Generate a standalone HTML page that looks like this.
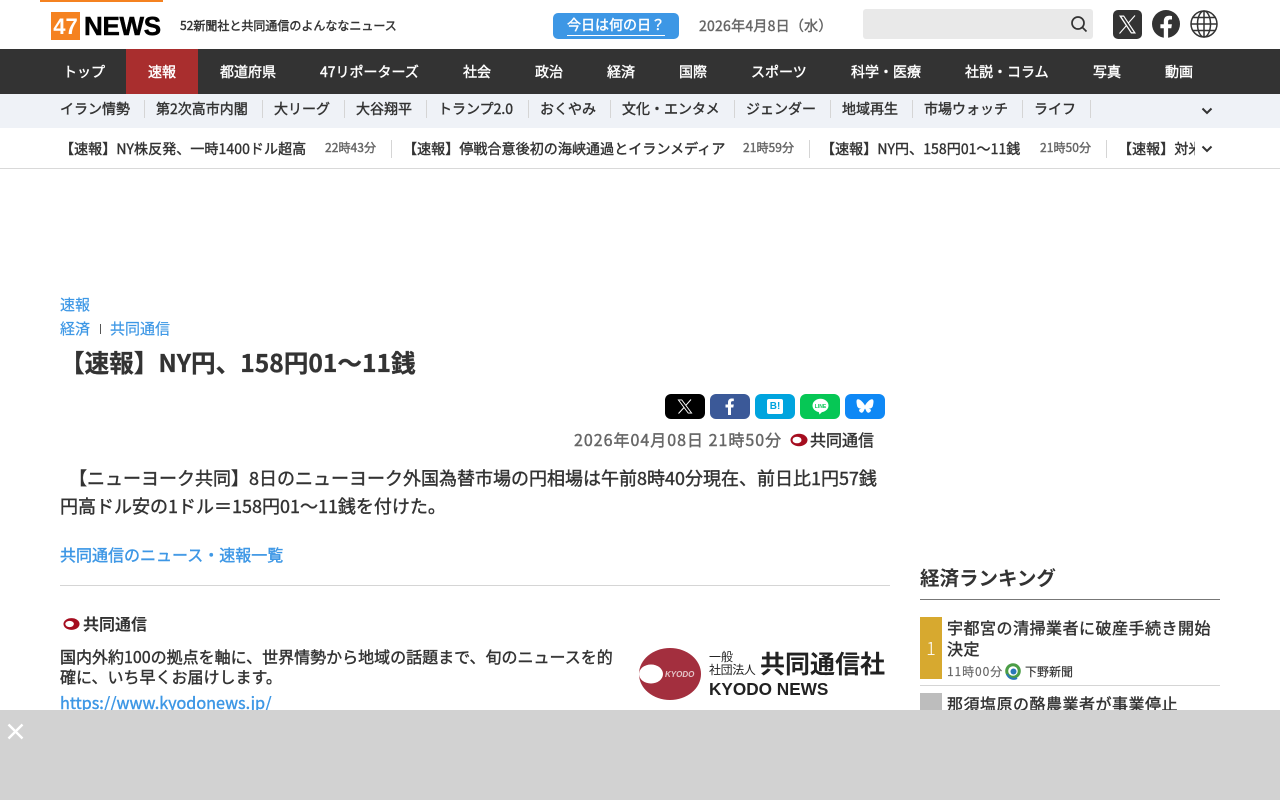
<!DOCTYPE html>
<html lang="ja"><head><meta charset="utf-8"><title>47NEWS</title>
<style>
*{box-sizing:border-box}
html,body{margin:0;padding:0;width:1280px;height:800px;overflow:hidden;background:#fff}
body{position:relative;font-family:"Noto Sans CJK JP","Liberation Sans",sans-serif;color:#333;font-weight:400;-webkit-text-stroke-width:.4px}
.a{position:absolute;white-space:nowrap;line-height:1.2}
.l{color:#3d97e5}
.n{-webkit-text-stroke-width:0}
.v{position:absolute;width:1px;background:#d5d5d5}
svg{position:absolute;display:block}
</style></head><body>
<div class="a" style="left:40px;top:0;width:123px;height:2px;background:#f58220"></div>
<div class="a n" style="left:51px;top:12px;width:29px;height:28px;background:#f58220;color:#fff;font:700 22px/29px 'Liberation Sans',sans-serif;text-align:center">47</div>
<div class="a" style="left:84px;top:11px;color:#000;font:700 26px/30px 'Liberation Sans',sans-serif;-webkit-text-stroke:.5px #000;letter-spacing:-.3px">NEWS</div>
<div class="a" style="left:180px;top:18px;font-size:12px;line-height:16px">52新聞社と共同通信のよんななニュース</div>
<div class="a" style="left:553px;top:13px;width:126px;height:26px;background:#3d97e5;border-radius:5px"></div>
<div class="a" style="left:567px;top:16px;color:#fff;font-size:14px;line-height:19px;border-bottom:1px solid #fff">今日は何の日？</div>
<div class="a" style="left:699px;top:16px;font-size:14px;line-height:20px;color:#666;letter-spacing:.25px">2026年4月8日（水）</div>
<div class="a" style="left:863px;top:9px;width:230px;height:30px;background:#e9e9e9;border-radius:3px"></div>
<svg style="left:1070px;top:15px" width="18" height="18" viewBox="0 0 18 18" fill="none" stroke="#333" stroke-width="1.7"><circle cx="8" cy="8" r="6"/><path d="M12.5 12.5L16.5 16.5"/></svg>
<svg style="left:1113px;top:10px" width="29" height="29" viewBox="0 0 29 29"><rect width="29" height="29" rx="5" fill="#333"/><path d="M6 5.5h5l12 18h-5zM8.5 6.800l10.200 15.400h2L10.500 6.800z" fill="#fff" fill-rule="evenodd"/><path d="M22 5.500L15.400 13M13.400 15.600L6.500 23.500" stroke="#fff" stroke-width="1.100"/></svg>
<svg style="left:1152px;top:10px" width="28" height="28" viewBox="0 0 28 28"><circle cx="14" cy="14" r="14" fill="#333"/><path d="M11.800 28V18.200H8.400v-4h3.400v-3c0-3.500 2-5.400 5.200-5.400 1.500 0 3 .3 3 .3v3.400h-1.700c-1.700 0-2.200 1-2.200 2.100v2.600h3.800l-.6 4h-3.200V28z" fill="#fff"/></svg>
<svg style="left:1190px;top:10px" width="28" height="28" viewBox="0 0 28 28" fill="none" stroke="#333" stroke-width="1.500"><circle cx="14" cy="14" r="13"/><ellipse cx="14" cy="14" rx="6.500" ry="13"/><path d="M14 1v26M1 14h26M3 7.500h22M3 20.500h22"/></svg>

<div class="a" style="left:0;top:49px;width:1280px;height:45px;background:#333"></div>
<div class="a" style="left:126px;top:49px;width:72px;height:45px;background:#a92e2e"></div>
<div class="a" style="left:0;top:64px;width:1280px;height:18px;color:#fff;font-size:14px;line-height:18px">
<span class="a" style="left:63px">トップ</span><span class="a" style="left:148px">速報</span><span class="a" style="left:220px">都道府県</span><span class="a" style="left:320px">47リポーターズ</span><span class="a" style="left:463px">社会</span><span class="a" style="left:535px">政治</span><span class="a" style="left:607px">経済</span><span class="a" style="left:679px">国際</span><span class="a" style="left:751px">スポーツ</span><span class="a" style="left:851px">科学・医療</span><span class="a" style="left:965px">社説・コラム</span><span class="a" style="left:1093px">写真</span><span class="a" style="left:1165px">動画</span></div>

<div class="a" style="left:0;top:94px;width:1280px;height:34px;background:#eff2f7"></div>
<div class="a" style="left:0;top:101px;width:1280px;height:18px;font-size:14px;line-height:18px">
<span class="a" style="left:60px">イラン情勢</span><span class="a" style="left:156px">第2次高市内閣</span><span class="a" style="left:274px">大リーグ</span><span class="a" style="left:356px">大谷翔平</span><span class="a" style="left:438px">トランプ2.0</span><span class="a" style="left:540px">おくやみ</span><span class="a" style="left:622px">文化・エンタメ</span><span class="a" style="left:746px">ジェンダー</span><span class="a" style="left:842px">地域再生</span><span class="a" style="left:924px">市場ウォッチ</span><span class="a" style="left:1034px">ライフ</span></div>
<div class="v" style="left:144px;top:100px;height:18px"></div><div class="v" style="left:262px;top:100px;height:18px"></div><div class="v" style="left:344px;top:100px;height:18px"></div><div class="v" style="left:426px;top:100px;height:18px"></div><div class="v" style="left:528px;top:100px;height:18px"></div><div class="v" style="left:610px;top:100px;height:18px"></div><div class="v" style="left:734px;top:100px;height:18px"></div><div class="v" style="left:830px;top:100px;height:18px"></div><div class="v" style="left:912px;top:100px;height:18px"></div><div class="v" style="left:1022px;top:100px;height:18px"></div><div class="v" style="left:1090px;top:100px;height:18px"></div>
<svg style="left:1201px;top:107px" width="12" height="8" viewBox="0 0 12 8" fill="none" stroke="#333" stroke-width="2"><path d="M1.500 1.500L6 6l4.500-4.500"/></svg>

<div class="a" style="left:0;top:168px;width:1280px;height:1px;background:#d9d9d9"></div>
<div class="a" style="left:0;top:141px;width:1195px;height:20px;overflow:hidden;font-size:14px;line-height:18px;letter-spacing:.08px">
<span class="a" style="left:60px;top:0">【速報】NY株反発、一時1400ドル超高</span><span class="a" style="left:325px;top:0;font-size:12px;color:#666">22時43分</span>
<span class="a" style="left:403px;top:0">【速報】停戦合意後初の海峡通過とイランメディア</span><span class="a" style="left:743px;top:0;font-size:12px;color:#666">21時59分</span>
<span class="a" style="left:821px;top:0">【速報】NY円、158円01～11銭</span><span class="a" style="left:1040px;top:0;font-size:12px;color:#666">21時50分</span>
<span class="a" style="left:1118px;top:0">【速報】対米関税交渉</span></div>
<div class="v" style="left:391px;top:140px;height:18px"></div><div class="v" style="left:809px;top:140px;height:18px"></div><div class="v" style="left:1106px;top:140px;height:18px"></div>
<svg style="left:1201px;top:145px" width="12" height="8" viewBox="0 0 12 8" fill="none" stroke="#333" stroke-width="2"><path d="M1.500 1.500L6 6l4.500-4.500"/></svg>

<div class="a l" style="left:60px;top:295px;font-size:15px;line-height:20px;-webkit-text-stroke-width:.2px">速報</div>
<div class="a l" style="left:60px;top:319px;font-size:15px;line-height:20px;-webkit-text-stroke-width:.2px">経済</div>
<div class="a" style="left:100px;top:324px;width:1px;height:10px;background:#555"></div>
<div class="a l" style="left:110px;top:319px;font-size:15px;line-height:20px;-webkit-text-stroke-width:.2px">共同通信</div>
<div class="a" style="left:60px;top:345px;font-size:24.600px;line-height:35px;font-weight:700;-webkit-text-stroke:.3px #333">【速報】NY円、158円01～11銭</div>

<div class="a" style="left:665px;top:394px;width:40px;height:25px;background:#000;border-radius:6px"></div>
<svg style="left:677px;top:399px" width="16" height="15" viewBox="0 0 16 15"><path d="M.5.500h4.500l10.500 14H11zM2.300 1.400l9.200 12.200h2.200L4.500 1.400z" fill="#fff" fill-rule="evenodd"/><path d="M14 .5L9 6.200M7 8.500L1.500 14.500" stroke="#fff"/></svg>
<div class="a" style="left:710px;top:394px;width:40px;height:25px;background:#3b5998;border-radius:6px"></div>
<svg style="left:725px;top:398px" width="10" height="17" viewBox="0 0 10 17"><path d="M3 17V9.500H.5V6.500H3V4.500C3 1.800 4.500.5 6.800.5c1 0 2 .1 2 .1v2.500H7.600C6.400 3.100 6 3.800 6 4.600v1.900h2.800l-.5 3H6V17z" fill="#fff"/></svg>
<div class="a" style="left:755px;top:394px;width:40px;height:25px;background:#00a4de;border-radius:6px"></div>
<div class="a n" style="left:767px;top:399px;width:16px;height:15px;background:#fff;border-radius:2px;color:#00a4de;font:700 10px/15px 'Liberation Sans',sans-serif;text-align:center">B!</div>
<div class="a" style="left:800px;top:394px;width:40px;height:25px;background:#06c755;border-radius:6px"></div>
<svg style="left:812px;top:398px" width="17" height="17" viewBox="0 0 17 17"><ellipse cx="8.500" cy="7.500" rx="8" ry="6.800" fill="#fff"/><path d="M6.500 13l1 3.500 3.500-3.500z" fill="#fff"/></svg>
<div class="a n" style="left:814px;top:404px;width:13px;text-align:center;color:#06c755;font:700 5px/7px 'Liberation Sans',sans-serif">LINE</div>
<div class="a" style="left:845px;top:394px;width:40px;height:25px;background:#0f88f5;border-radius:6px"></div>
<svg style="left:856px;top:399px" width="18" height="15" viewBox="0 0 18 15"><path d="M9 6.500C8.200 5 5.800 1.700 3.500.6 1.800-.2.500.2.500 2.600c0 1 .5 4.500 1 5.300.9 1.600 2.800 1.900 4.400 1.500-2.900.5-3.600 2-2 3.500 2.500 2.400 3.700-.6 4.600-2.500l.5-.9.500.9c.9 1.900 2.100 4.900 4.600 2.500 1.600-1.500.9-3-2-3.500 1.600.4 3.500.1 4.400-1.500.5-.8 1-4.300 1-5.300 0-2.400-1.300-2.800-3-2-2.300 1.100-4.700 4.400-5.500 5.900z" fill="#fff"/></svg>

<div class="a" style="left:574px;top:429px;font-size:16px;line-height:21px;color:#666;letter-spacing:1px">2026年04月08日 21時50分</div>
<svg style="left:790px;top:433px" width="18" height="14" viewBox="0 0 18 14"><ellipse cx="9" cy="7" rx="8.500" ry="6.200" fill="#a50d1f"/><ellipse cx="7" cy="7" rx="4.500" ry="3.300" fill="#fff"/></svg>
<div class="a" style="left:810px;top:429px;font-size:16px;line-height:21px">共同通信</div>

<div class="a" style="left:60px;top:464px;width:830px;white-space:normal;font-size:18px;line-height:29px">
<span style="position:absolute;left:9px;top:0;white-space:nowrap">【ニューヨーク共同】8日のニューヨーク外国為替市場の円相場は午前8時40分現在、前日比1円57銭</span>
<span style="position:absolute;left:0;top:28px;white-space:nowrap">円高ドル安の1ドル＝158円01～11銭を付けた。</span></div>
<div class="a l" style="left:60px;top:543px;font-size:16px;line-height:22px">共同通信のニュース・速報一覧</div>
<div class="a" style="left:60px;top:585px;width:830px;height:1px;background:#d5d5d5"></div>

<svg style="left:63px;top:617px" width="17" height="14" viewBox="0 0 18 14"><ellipse cx="9" cy="7" rx="8.500" ry="6.200" fill="#a50d1f"/><ellipse cx="7" cy="7" rx="4.500" ry="3.300" fill="#fff"/></svg>
<div class="a n" style="left:83px;top:612px;font-size:16px;line-height:22px;font-weight:700">共同通信</div>
<div class="a" style="left:60px;top:645px;font-size:16px;line-height:22px">国内外約100の拠点を軸に、世界情勢から地域の話題まで、旬のニュースを的</div>
<div class="a" style="left:60px;top:665px;font-size:16px;line-height:22px">確に、いち早くお届けします。</div>
<div class="a l" style="left:60px;top:691px;font-size:16.200px;line-height:23px">https://www.kyodonews.jp/</div>

<svg style="left:639px;top:648px" width="62" height="52" viewBox="0 0 62 52"><ellipse cx="31" cy="26" rx="31" ry="26" fill="#a32f3e"/><ellipse cx="12" cy="26" rx="12" ry="9.500" fill="#fff"/></svg>
<div class="a n" style="left:665px;top:670px;color:#e5c5c9;font:italic 700 8px/9px 'Liberation Sans',sans-serif">KYODO</div>
<div class="a n" style="left:709px;top:650px;font-size:12px;line-height:14px;color:#222">一般</div>
<div class="a n" style="left:709px;top:663px;font-size:12px;line-height:14px;color:#222;letter-spacing:-.4px">社団法人</div>
<div class="a n" style="left:760px;top:647px;font-size:25px;line-height:33px;font-weight:700;color:#222">共同通信社</div>
<div class="a n" style="left:709px;top:679px;font:700 17.200px/20px 'Liberation Sans',sans-serif;color:#222">KYODO NEWS</div>

<div class="a n" style="left:920px;top:563px;font-size:19.500px;line-height:28px;font-weight:700">経済ランキング</div>
<div class="a" style="left:920px;top:599px;width:300px;height:1px;background:#777"></div>
<div class="a n" style="left:920px;top:617px;width:22px;height:62px;background:#d7a92f;color:#fff;font-size:18px;line-height:62px;text-align:center;font-weight:300">1</div>
<div class="a" style="left:947px;top:616px;font-size:16px;line-height:22px;letter-spacing:.5px">宇都宮の清掃業者に破産手続き開始</div>
<div class="a" style="left:947px;top:637px;font-size:16px;line-height:22px;letter-spacing:.5px">決定</div>
<div class="a" style="left:947px;top:663px;font-size:12px;line-height:17px;color:#666;letter-spacing:.9px;-webkit-text-stroke-width:.15px">11時00分</div>
<svg style="left:1005px;top:662px" width="16" height="18" viewBox="0 0 16 18" fill="none"><circle cx="8" cy="9" r="6.300" stroke="#4b9d46" stroke-width="3"/><circle cx="8.500" cy="9.500" r="3" fill="#2a78b8"/><path d="M2 12a7 7 0 0 0 10 4" stroke="#2a78b8" stroke-width="2"/></svg>
<div class="a" style="left:1025px;top:663px;font-size:12px;line-height:17px;-webkit-text-stroke-width:.15px">下野新聞</div>
<div class="a" style="left:920px;top:685px;width:300px;height:1px;background:#d5d5d5"></div>
<div class="a" style="left:920px;top:693px;width:22px;height:30px;background:#bdbdbd"></div>
<div class="a" style="left:947px;top:692px;font-size:16px;line-height:22px;letter-spacing:.5px">那須塩原の酪農業者が事業停止</div>

<div class="a" style="left:0;top:710px;width:1280px;height:90px;background:#d2d2d2"></div>
<svg style="left:7px;top:723px" width="17" height="17" viewBox="0 0 17 17" fill="none" stroke="#fff" stroke-width="2.400"><path d="M1.500 1.500l14 14M15.500 1.500l-14 14"/></svg>
</body></html>
